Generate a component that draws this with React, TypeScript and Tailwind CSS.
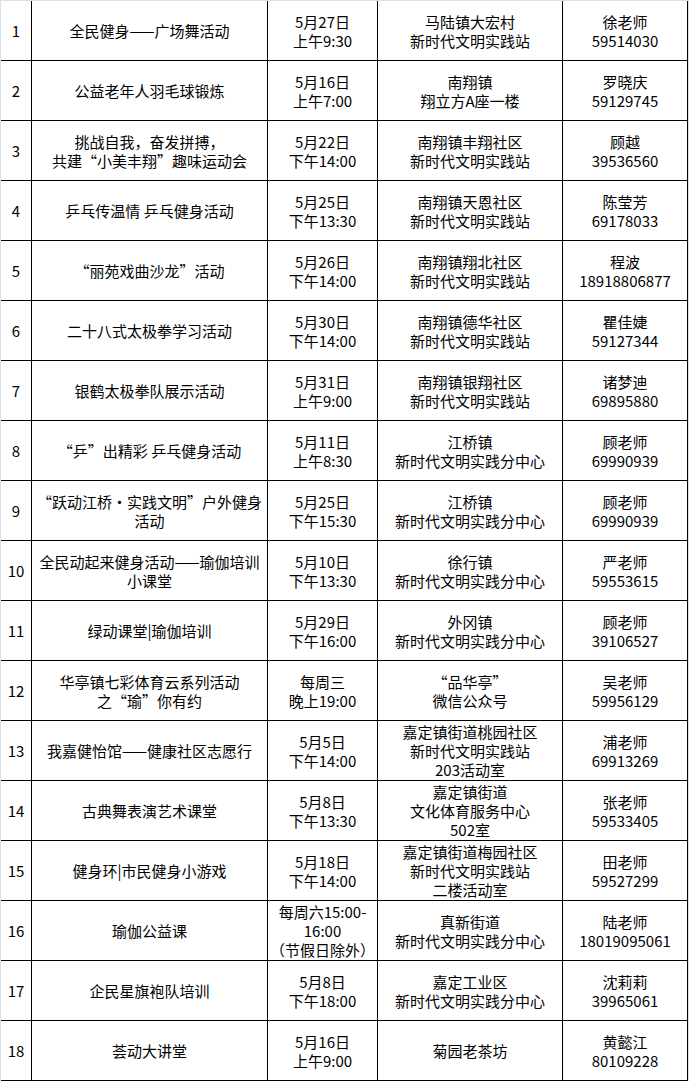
import React from "react";

type Row = [string, string[], string[], string[], string[]];

const rows: Row[] = [
  ["1", ["全民健身——广场舞活动"], ["5月27日", "上午9:30"], ["马陆镇大宏村", "新时代文明实践站"], ["徐老师", "59514030"]],
  ["2", ["公益老年人羽毛球锻炼"], ["5月16日", "上午7:00"], ["南翔镇", "翔立方A座一楼"], ["罗晓庆", "59129745"]],
  ["3", ["挑战自我，奋发拼搏，", "共建“小美丰翔”趣味运动会"], ["5月22日", "下午14:00"], ["南翔镇丰翔社区", "新时代文明实践站"], ["顾越", "39536560"]],
  ["4", ["乒乓传温情 乒乓健身活动"], ["5月25日", "下午13:30"], ["南翔镇天恩社区", "新时代文明实践站"], ["陈莹芳", "69178033"]],
  ["5", ["“丽苑戏曲沙龙”活动"], ["5月26日", "下午14:00"], ["南翔镇翔北社区", "新时代文明实践站"], ["程波", "18918806877"]],
  ["6", ["二十八式太极拳学习活动"], ["5月30日", "下午14:00"], ["南翔镇德华社区", "新时代文明实践站"], ["瞿佳婕", "59127344"]],
  ["7", ["银鹤太极拳队展示活动"], ["5月31日", "上午9:00"], ["南翔镇银翔社区", "新时代文明实践站"], ["诸梦迪", "69895880"]],
  ["8", ["“乒”出精彩 乒乓健身活动"], ["5月11日", "上午8:30"], ["江桥镇", "新时代文明实践分中心"], ["顾老师", "69990939"]],
  ["9", ["“跃动江桥·实践文明”户外健身", "活动"], ["5月25日", "下午15:30"], ["江桥镇", "新时代文明实践分中心"], ["顾老师", "69990939"]],
  ["10", ["全民动起来健身活动——瑜伽培训", "小课堂"], ["5月10日", "下午13:30"], ["徐行镇", "新时代文明实践分中心"], ["严老师", "59553615"]],
  ["11", ["绿动课堂|瑜伽培训"], ["5月29日", "下午16:00"], ["外冈镇", "新时代文明实践分中心"], ["顾老师", "39106527"]],
  ["12", ["华亭镇七彩体育云系列活动", "之“瑜”你有约"], ["每周三", "晚上19:00"], ["“品华亭”", "微信公众号"], ["吴老师", "59956129"]],
  ["13", ["我嘉健怡馆——健康社区志愿行"], ["5月5日", "下午14:00"], ["嘉定镇街道桃园社区", "新时代文明实践站", "203活动室"], ["浦老师", "69913269"]],
  ["14", ["古典舞表演艺术课堂"], ["5月8日", "下午13:30"], ["嘉定镇街道", "文化体育服务中心", "502室"], ["张老师", "59533405"]],
  ["15", ["健身环|市民健身小游戏"], ["5月18日", "下午14:00"], ["嘉定镇街道梅园社区", "新时代文明实践站", "二楼活动室"], ["田老师", "59527299"]],
  ["16", ["瑜伽公益课"], ["每周六15:00-", "16:00", "（节假日除外）"], ["真新街道", "新时代文明实践分中心"], ["陆老师", "18019095061"]],
  ["17", ["企民星旗袍队培训"], ["5月8日", "下午18:00"], ["嘉定工业区", "新时代文明实践分中心"], ["沈莉莉", "39965061"]],
  ["18", ["荟动大讲堂"], ["5月16日", "上午9:00"], ["菊园老茶坊"], ["黄懿江", "80109228"]],
];

function Cell({ lines }: { lines: string[] }) {
  return (
    <div className="flex flex-col items-center justify-center border-r border-b border-black text-center">
      {lines.map((l, i) => (
        <div key={i} className="whitespace-nowrap">
          {l}
        </div>
      ))}
    </div>
  );
}

export default function App() {
  return (
    <div
      className="w-[689px] h-[1081px] bg-[#d8e1ee] pt-[1px] pl-[1px] text-black text-[15px] leading-[19px]"
      style={{ fontFamily: '"Noto Sans CJK SC", "Noto Sans", sans-serif' }}
    >
      <div className="grid grid-cols-[31px_236px_110px_185px_125px] auto-rows-[60px] bg-white w-[687px]">
        {rows.map((r) => (
          <React.Fragment key={r[0]}>
            <Cell lines={[r[0]]} />
            <Cell lines={r[1]} />
            <Cell lines={r[2]} />
            <Cell lines={r[3]} />
            <Cell lines={r[4]} />
          </React.Fragment>
        ))}
      </div>
    </div>
  );
}
